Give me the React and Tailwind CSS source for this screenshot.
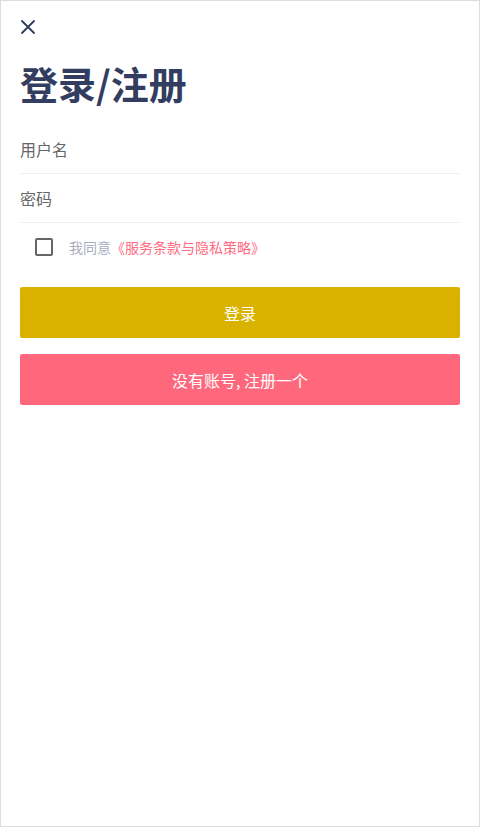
import React, { useState } from "react";

const font = {
	fontFamily: '"Noto Sans CJK SC", "Noto Sans", sans-serif',
};

const Field = ({ placeholder, type = "text" }) => (
	<div className="border-b border-[#eeeeee] h-[49px] flex items-center">
		<input
			type={type}
			placeholder={placeholder}
			className="w-full bg-transparent outline-none text-[16px] text-[#555] placeholder:text-[#666]"
		/>
	</div>
);

export default function App() {
	const [agreed, setAgreed] = useState(false);

	return (
		<div
			className="w-[480px] h-[827px] bg-white border border-[#dddddd] overflow-hidden"
			style={font}
		>
			<div className="px-[19px] pt-[17px]">
				<button className="w-[18px] h-[18px] flex items-center justify-center -ml-[1px]">
					<svg width="16" height="16" viewBox="0 0 16 16" fill="none">
						<path
							d="M2 2L14 14M14 2L2 14"
							stroke="#2f3a5c"
							strokeWidth="1.8"
							strokeLinecap="round"
						/>
					</svg>
				</button>

				<h1 className="mt-[24px] text-[38px] leading-[46px] font-bold text-[#333d5f]">
					登录/注册
				</h1>

				<div className="mt-[19px]">
					<Field placeholder="用户名" />
					<Field placeholder="密码" type="password" />
				</div>

				<label className="flex items-center h-[48px] pl-[15px] gap-[16px] cursor-pointer">
					<span
						onClick={() => setAgreed(!agreed)}
						className="w-[18px] h-[18px] border-2 border-[#666] rounded-[2px] flex items-center justify-center"
					>
						{agreed && (
							<svg width="12" height="12" viewBox="0 0 12 12" fill="none">
								<path d="M2 6l3 3 5-6" stroke="#666" strokeWidth="2" />
							</svg>
						)}
					</span>
					<span className="text-[14px] text-[#abaebf]">
						我同意<span className="text-[#ff6b81]">《服务条款与隐私策略》</span>
					</span>
				</label>

				<div className="mt-[16px] flex flex-col gap-[16px]">
					<button className="h-[51px] w-full rounded-[2px] bg-[#d9b300] text-white text-[16px]">
						登录
					</button>
					<button className="h-[51px] w-full rounded-[2px] bg-[#ff687c] text-white text-[16px]">
						没有账号, 注册一个
					</button>
				</div>
			</div>
		</div>
	);
}
